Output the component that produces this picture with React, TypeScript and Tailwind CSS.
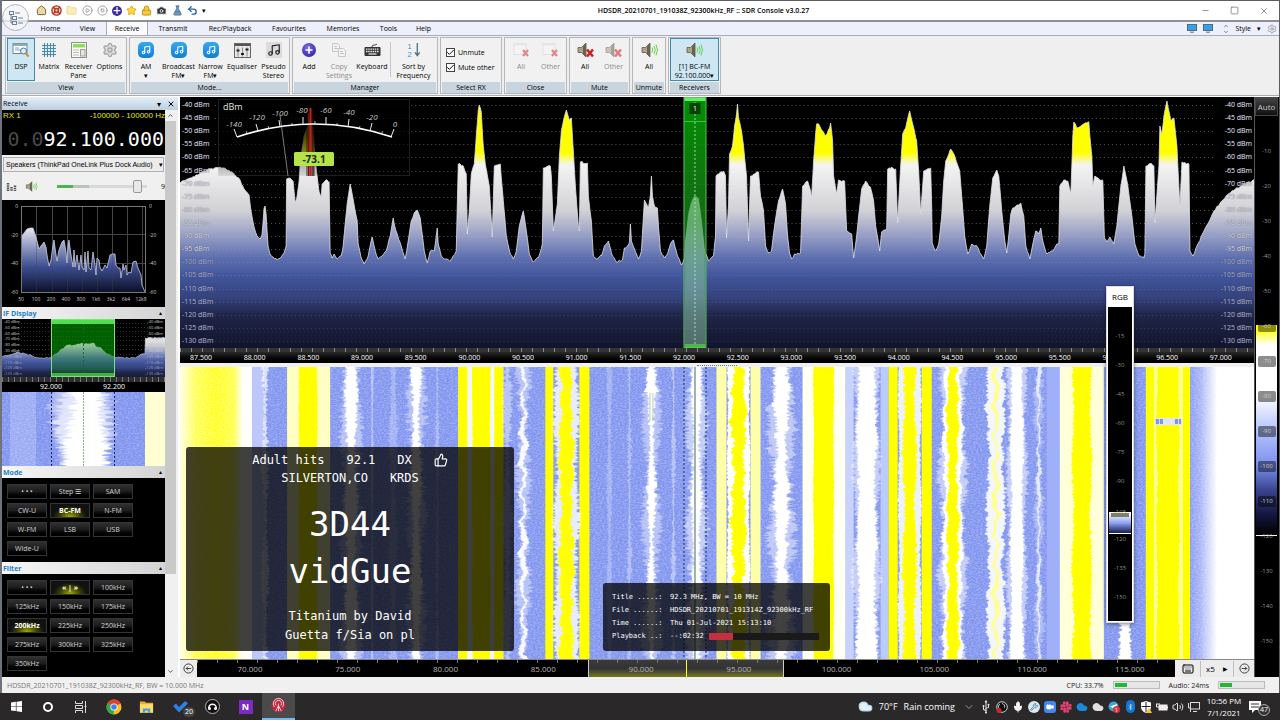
import { useMemo } from "react";
import type { ReactNode } from "react";
import {
  Bluetooth,
  Camera,
  Check,
  ChevronDown,
  ChevronUp,
  CirclePlay,
  CircleStop,
  Cloud,
  FlaskConical,
  Folder,
  Home,
  Keyboard,
  LifeBuoy,
  Lock,
  Mic,
  Minus,
  Music,
  Plus,
  Settings,
  Slack,
  Square,
  Star,
  ThumbsUp,
  Undo2,
  Usb,
  Video,
  Volume2,
  Wrench,
  X,
} from "lucide-react";

type Point = [number, number];

const WATERFALL_W = 1073;
const WATERFALL_H = 292;

const TRACE =
  "0,87 10,82 20,77 30,73 40,71 46,73 54,78 60,84 64,93 69,99 71,115 74,131 77,140 80,143 82,138 83,126 84,112 85,110 86,118 87,135 88,150 90,158 93,161 97,164 101,161 104,157 106,150 106.5,83 109,82 113,85 115,107 117,100 119,85 120,68 122,53 124,40 127,32 130,20 133,38 135,62 137,80 139,96 141,102 142,88 147,84 149,86 150,157 152,162 154,158 157,163 161,160 163,150 165,128 167,108 170,88 172,98 175,115 177,124 178,148 181,162 184,168 188,160 191,145 192,141 195,155 198,163 202,160 206,155 210,140 213,122 214,128 217,138 221,150 225,163 228,145 231,125 234,117 237,114 240,122 242,138 244,155 247,167 250,155 254,155 257,132 258,148 261,160 265,163 270,165 276,155 277,110 278,68 283,70 286,78 287,138 289,115 291,78 294,68 296,40 298,14 299,9 301,16 303,50 305,68 309,90 312,141 314,70 320,68 321,82 323,105 326,140 330,158 333,163 336,155 339,130 343,115 346,135 349,158 353,166 358,162 362,148 363,72 370,70 371,80 373,135 377,108 379,60 381,35 383,25 386,14 389,24 391,22 393,55 395,90 398,130 399,135 400,66 407,67 408,100 411,125 413,160 416,163 421,160 424,150 428,145 432,160 436,166 442,164 444,152 447,150 449,146 450,128 451,145 454,153 458,163 461,155 463,120 464,104 468,112 470,98 471,80 472,100 474,110 477,112 478,130 480,155 484,162 487,158 490,148 493,144 497,160 501,169 504,162 505,145 508,118 511,106 514,100 518,102 521,125 524,155 528,165 533,160 535,140 535.5,80 538,78 543,75 545,80 546,142 548,110 549,58 552,50 554,30 556,18 557,8 558,22 561,35 563,50 566,80 568,145 570,80 574,78 578,76 580,100 583,115 585,150 588,157 591,155 594,130 598,105 602,93 605,108 607,140 609,157 611,163 614,158 620,157 622,90 627,85 630,95 631,102 633,65 635,38 636,28 638,28 641,34 645,40 649,32 650,27 652,45 653,80 656,98 658,84 664,85 666,135 671,138 673,162 676,140 678,120 681,93 685,85 690,92 693,105 695,130 699,155 701,136 706,134 707,73 711,71 715,73 717,127 720,70 722,38 725,32 729,15 732,28 736,45 738,75 740,118 743,75 750,72 751,110 751.5,147 755,155 758,148 761,120 763,85 765,65 769,55 770,53 774,60 779,75 781,100 784,140 787,158 791,148 796,150 800,158 803,163 806,150 809,110 812,82 816,74 818,80 821,115 824,145 826,157 828,140 830,118 832,112 835,110 840,107 843,120 845,150 849,163 852,148 855,135 858,138 860,132 862,145 866,158 872,155 876,148 878,148 879,90 883,84 887,85 890,98 892,40 893,26 896,32 900,30 908,26 909,40 911,60 912,90 914,80 917,82 922,85 923.5,142 926,146 929,141 933,148 936,130 940,90 943,70 947,90 951,120 954,148 958,160 963,162 964,158 965,70 970,67 973,70 974,127 978,70 979,30 981,38 983,20 986,5 990,25 993,22 996,50 999,112 1001,66 1008,68 1009,155 1012,160 1016,150 1023,135 1033,115 1045,100 1056,92 1073,84";

const AUDIO_TRACE =
  "19,38 22,33 25,29 28,28 31,28 34,37 36,45 37,49 39,46 42,42 44,47 45,55 47,66 49,60 51,45 52,40 54,55 55,61 57,50 60,42 62,40 64,52 65,63 66,45 67,40 69,55 71,67 72,50 73,67 75,55 77,70 79,55 80,67 82,70 83,52 84,72 86,51 87,68 89,70 91,52 93,65 94,75 95,58 97,60 98,67 100,71 103,65 105,68 108,55 110,54 113,54 114,65 116,68 118,68 119,78 121,64 122,70 124,65 125,75 127,72 129,73 131,62 134,61 136,68 139,75 140,85 143,92";

const IF_TRACE =
  "0,38 8,36 15,33 20,34 30,37 36,39 49,39 54,35 60,30 65,26 72,26 76,25 80,24 85,25 92,24 94,28 99,29 104,34 112,38 120,39 132,39 140,35 143,35 143.5,19 163,19";

// Straight-edged carriers, left to right.
const SOLID_BANDS: { x: number; w: number; fill: string }[] = [
  { x: 72, w: 12, fill: "#bcc7fa" },
  { x: 107, w: 43, fill: "#ffffc4" },
  { x: 278, w: 45, fill: "#f4f6ff" },
  { x: 278, w: 9, fill: "#ffff00" },
  { x: 314, w: 9, fill: "#ffff00" },
  { x: 365, w: 8, fill: "#ffff00" },
  { x: 399, w: 10, fill: "#ffff00" },
  { x: 536, w: 10, fill: "#ffffa8" },
  { x: 570, w: 10, fill: "#ffffa8" },
  { x: 622, w: 43, fill: "#fffff2" },
  { x: 665, w: 8, fill: "#c8d3fd" },
  { x: 700, w: 8, fill: "#bccbfd" },
  { x: 708, w: 9, fill: "#ffff00" },
  { x: 741, w: 10, fill: "#ffff00" },
  { x: 866, w: 13, fill: "#9fb0f8" },
  { x: 879, w: 44, fill: "#ffffd8" },
  { x: 965, w: 44, fill: "#ffff9a" },
  { x: 965, w: 8, fill: "#ffff00" },
  { x: 1002, w: 7, fill: "#ffff00" },
];

// Ragged-edged carriers: centre, half width, jitter, slow wobble.
const RAGGED_BANDS: { cx: number; hw: number; amp: number; wob: number; fill: string; o?: number }[] = [
  { cx: 85, hw: 2, amp: 4, wob: 0, fill: "#fff", o: 0.7 },
  { cx: 171, hw: 9, amp: 7, wob: 0, fill: "#fff", o: 0.4 },
  { cx: 171, hw: 5, amp: 4, wob: 0, fill: "#fff" },
  { cx: 192, hw: 1, amp: 1, wob: 0, fill: "#fff", o: 0.4 },
  { cx: 213, hw: 3, amp: 3, wob: 0, fill: "#fff", o: 0.25 },
  { cx: 236, hw: 7, amp: 8, wob: 0, fill: "#fff", o: 0.4 },
  { cx: 236, hw: 4, amp: 4, wob: 0, fill: "#fff" },
  { cx: 257, hw: 1, amp: 2, wob: 0, fill: "#fff", o: 0.3 },
  { cx: 327, hw: 3, amp: 5, wob: 0, fill: "#fff", o: 0.4 },
  { cx: 343, hw: 5, amp: 7, wob: 1, fill: "#fff", o: 0.4 },
  { cx: 343, hw: 2, amp: 3, wob: 2, fill: "#fff", o: 0.9 },
  { cx: 386, hw: 11, amp: 6, wob: 0, fill: "#fff", o: 0.8 },
  { cx: 429, hw: 2, amp: 2, wob: 0, fill: "#fff", o: 0.25 },
  { cx: 449, hw: 1, amp: 3, wob: 0, fill: "#fff", o: 0.35 },
  { cx: 471, hw: 7, amp: 8, wob: 0, fill: "#fff", o: 0.4 },
  { cx: 471, hw: 3, amp: 4, wob: 0, fill: "#fff" },
  { cx: 493, hw: 1, amp: 3, wob: 0, fill: "#fff", o: 0.4 },
  { cx: 516, hw: 8, amp: 8, wob: 0, fill: "#fff", o: 0.5 },
  { cx: 516, hw: 4, amp: 4, wob: 0, fill: "#fff" },
  { cx: 558, hw: 11, amp: 2, wob: 0, fill: "#fff" },
  { cx: 601, hw: 11, amp: 9, wob: 1, fill: "#fff", o: 0.45 },
  { cx: 601, hw: 6, amp: 5, wob: 1, fill: "#fff" },
  { cx: 686, hw: 12, amp: 6, wob: 0, fill: "#fff", o: 0.5 },
  { cx: 686, hw: 9, amp: 4, wob: 0, fill: "#fff" },
  { cx: 729, hw: 11, amp: 2, wob: 0, fill: "#fff", o: 0.85 },
  { cx: 772, hw: 12, amp: 7, wob: 1, fill: "#fff", o: 0.5 },
  { cx: 772, hw: 9, amp: 3, wob: 1, fill: "#fff" },
  { cx: 815, hw: 8, amp: 4, wob: 1, fill: "#fff", o: 0.9 },
  { cx: 836, hw: 9, amp: 5, wob: 0, fill: "#fff", o: 0.5 },
  { cx: 836, hw: 6, amp: 3, wob: 0, fill: "#fff" },
  { cx: 858, hw: 3, amp: 5, wob: 1, fill: "#fff", o: 0.3 },
  { cx: 858, hw: 1, amp: 2, wob: 1, fill: "#fff", o: 0.7 },
  { cx: 944, hw: 5, amp: 4, wob: 0, fill: "#fff" },
  { cx: 128, hw: 9, amp: 1, wob: 0, fill: "#ff0" },
  { cx: 301, hw: 9, amp: 1, wob: 0, fill: "#ff0" },
  { cx: 386, hw: 6, amp: 4, wob: 1, fill: "#ff0" },
  { cx: 558, hw: 6, amp: 4, wob: 1, fill: "#ff0" },
  { cx: 643, hw: 10, amp: 1, wob: 0, fill: "#ff0" },
  { cx: 729, hw: 6, amp: 4, wob: 0, fill: "#ff0" },
  { cx: 772, hw: 5, amp: 3, wob: 1, fill: "#ff0" },
  { cx: 815, hw: 2, amp: 2, wob: 2, fill: "#ffff9a" },
  { cx: 901, hw: 9, amp: 3, wob: 0, fill: "#ff0" },
  { cx: 987, hw: 11, amp: 2, wob: 0, fill: "#ff0" },
];

function seededRandom(seed: number) {
  let s = seed * 7919 + 13;
  return () => {
    s = (s * 1103515245 + 12345) & 0x7fffffff;
    return s / 0x7fffffff;
  };
}

function raggedPath(seed: number, cx: number, hw: number, amp: number, wob: number, height: number) {
  const rand = seededRandom(seed);
  const left: string[] = [];
  const right: string[] = [];
  for (let y = 0; y <= height; y += 1) {
    const c = cx + wob * Math.sin(y / 5 + seed) + wob * 0.5 * Math.sin(y / 2.3);
    const swell = Math.sin(y / 17 + seed * 2) * amp * 0.3;
    const l = Math.max(0.4, hw + swell + (rand() - 0.5) * amp);
    const r = Math.max(0.4, hw + swell + (rand() - 0.5) * amp);
    left.push(`${(c - l).toFixed(1)},${y}`);
    right.push(`${(c + r).toFixed(1)},${y}`);
  }
  return `M${left.join("L")}L${right.reverse().join("L")}Z`;
}

function roughen(points: string, size: number) {
  const rand = seededRandom(5);
  const pts = points.split(" ").map((p) => p.split(",").map(Number) as Point);
  const out: string[] = [];
  pts.forEach(([x, y], i) => {
    out.push(`${x},${y}`);
    const next = pts[i + 1];
    if (!next) return;
    const gap = next[0] - x;
    for (let d = 1.5; d < gap; d += 1.5) {
      const t = d / gap;
      out.push(`${x + d},${(y + (next[1] - y) * t + (rand() - 0.5) * size).toFixed(1)}`);
    }
  });
  return out.join(" ");
}

function SignalGradient({ id, y1, y2, hot }: { id: string; y1: number; y2: number; hot?: boolean }) {
  return (
    <linearGradient id={id} gradientUnits="userSpaceOnUse" x1="0" x2="0" y1={y1} y2={y2}>
      <stop offset="0" stopColor={hot ? "#ffff00" : "#fff"} />
      <stop offset="0.18" stopColor={hot ? "#ffff00" : "#ececf0"} />
      <stop offset="0.23" stopColor="#f4f4f4" />
      <stop offset="0.42" stopColor="#d2d2d6" />
      <stop offset="0.52" stopColor="#9ba2c6" />
      <stop offset="0.62" stopColor="#5f70b0" />
      <stop offset="0.7" stopColor="#42559b" />
      <stop offset="0.79" stopColor="#34427c" />
      <stop offset="0.86" stopColor="#20264a" />
      <stop offset="1" stopColor="#11142b" />
    </linearGradient>
  );
}

/* ---------- ribbon icons ---------- */

function DspIcon() {
  return (
    <svg viewBox="0 0 18 16" className="h-4 w-[18px]">
      <rect x="1" y="1.500" width="14" height="10" fill="#fff" stroke="#6a8791" />
      <rect x="1" y="1.500" width="14" height="2.500" fill="#93a9ad" />
      <path d="M3 6h4M3 8h6" stroke="#7aa4b0" />
      <circle cx="11.500" cy="9" r="3" fill="#d8f0fa" stroke="#4b7d94" />
      <path d="M13.500 11l3 3.500" stroke="#d58a3a" strokeWidth="2" />
    </svg>
  );
}

function MatrixIcon() {
  return (
    <svg viewBox="0 0 16 16" className="size-4">
      <rect x="1" y="1" width="14" height="14" fill="#e3eef3" />
      <path d="M3.500 1v14M6.500 1v14M9.500 1v14M12.500 1v14M1 3.500h14M1 6.500h14M1 9.500h14M1 12.500h14" stroke="#4d8aa8" />
    </svg>
  );
}

function PaneIcon() {
  return (
    <svg viewBox="0 0 16 16" className="size-4">
      <rect x="0.500" y="0.500" width="15" height="15" fill="#fafafa" stroke="#8b938b" />
      <rect x="2" y="2" width="12" height="3.500" fill="#8ce053" />
      <path d="M2 8h6M2 10.500h6M2 13h6" stroke="#b9bdb9" />
      <rect x="9.500" y="7.500" width="4.500" height="6.500" fill="#e6e6e6" stroke="#a0a0a0" />
    </svg>
  );
}

function NoteIcon() {
  return (
    <span className="flex size-4 items-center justify-center rounded-[5px] bg-gradient-to-b from-[#35a9ef] to-[#0c7fd6] text-white">
      <Music className="size-[10px]" strokeWidth={2.5} />
    </span>
  );
}

function EqualiserIcon() {
  return (
    <svg viewBox="0 0 17 15" className="h-[15px] w-[17px]">
      <rect x="0.500" y="0.500" width="16" height="14" fill="#e8e8e8" stroke="#666" />
      <rect x="1" y="1" width="15" height="2" fill="#555" />
      <path d="M4 4.500v9M8.500 4.500v9M13 4.500v9" stroke="#888" />
      <path d="M2.500 7.500h3M7 11h3M11.500 6.500h3" stroke="#222" strokeWidth="1.800" />
    </svg>
  );
}

function StereoIcon() {
  return (
    <span className="flex size-4 items-center justify-center bg-[#dcdcdc] text-[#222]">
      <Music className="size-[14px]" strokeWidth={2} />
    </span>
  );
}

function AddIcon() {
  return (
    <span className="flex size-[14px] items-center justify-center rounded-full bg-[radial-gradient(circle_at_40%_30%,#7a68e8,#2a1a94)] text-white">
      <Plus className="size-[10px]" strokeWidth={4} />
    </span>
  );
}

function CopyIcon() {
  return (
    <svg viewBox="0 0 16 16" className="size-4" fill="#f4f4f4" stroke="#a4a4a4">
      <path d="M1.500 1.500h5l2 2v6h-7z" />
      <path d="M3 4.500h3M3 6.500h4" />
      <path d="M7.500 6.500h5l2 2v6h-7z" />
      <path d="M9 9.500h3M9 11.500h4" />
    </svg>
  );
}

function KeyboardIcon() {
  return (
    <svg viewBox="0 0 17 14" className="h-[14px] w-[17px]">
      <path d="M8 4c0-3 3-1 5-3" fill="none" stroke="#333" />
      <rect x="0.500" y="4" width="16" height="9" rx="1" fill="#333" />
      <path d="M2 6.200h13M2 8.500h13" stroke="#eee" strokeWidth="1.300" strokeDasharray="1.500 0.700" />
      <path d="M4.500 11h8" stroke="#eee" strokeWidth="1.200" />
    </svg>
  );
}

function SortIcon() {
  return (
    <svg viewBox="0 0 14 17" className="h-4 w-[14px]">
      <text x="0" y="7" fontSize="8" fill="#3b8fc9" fontFamily="Liberation Sans, sans-serif">1</text>
      <text x="0" y="16" fontSize="8" fill="#3b8fc9" fontFamily="Liberation Sans, sans-serif">2</text>
      <path d="M10.500 1v13M8 11l2.500 3.500L13 11" fill="none" stroke="#4d7280" strokeWidth="1.400" />
    </svg>
  );
}

function CloseDocIcon() {
  return (
    <svg viewBox="0 0 17 16" className="h-4 w-[17px]">
      <rect x="1" y="1.500" width="12" height="11" fill="#f8f8f8" stroke="#d5d5d5" />
      <rect x="1" y="1.500" width="12" height="2" fill="#dedede" />
      <path d="M10 8l5 6M15 8l-5 6" stroke="#d4363f" strokeWidth="2.400" />
    </svg>
  );
}

function SpeakerIcon({ muted }: { muted?: boolean }) {
  return (
    <svg viewBox="0 0 17 16" className="h-4 w-[17px]">
      <path d="M1 5.500h3.500L9 1v14L4.500 10.500H1z" fill="#aaa58c" stroke="#5a574a" strokeWidth="0.800" />
      <path d="M6 4.500L9 1v14L6 12z" fill="#66634f" />
      {muted ? (
        <path d="M10 7.500l6 7M16 7.500l-6 7" stroke="#cf1f24" strokeWidth="2.600" />
      ) : (
        <g fill="none" stroke="#63d24a">
          <path d="M11 5.500q1.500 2.500 0 5" />
          <path d="M13 4q2.500 4 0 8" />
          <path d="M15 2.500q3 5.500 0 11" />
        </g>
      )}
    </svg>
  );
}

/* ---------- ribbon ---------- */

type RibbonItem = { lines: string[]; icon: ReactNode; width: string; dim?: boolean; selected?: boolean };

function RibbonButton({ item }: { item: RibbonItem }) {
  return (
    <button
      type="button"
      className={`flex shrink-0 flex-col items-center border pt-[3px] ${item.width} ${
        item.selected ? "border-[#3c8dad] bg-[#cfe7f2]" : "border-transparent"
      } ${item.dim ? "text-[#8c8c8c]" : ""}`}
    >
      <span className={`flex h-4 items-center justify-center ${item.dim ? "opacity-55" : ""}`}>{item.icon}</span>
      <span className="mt-[4px] flex flex-col items-center whitespace-nowrap">
        {item.lines.map((line) => (
          <span key={line}>{line}</span>
        ))}
      </span>
    </button>
  );
}

function RibbonGroup({ title, children }: { title: string; children: ReactNode }) {
  return (
    <section className="flex flex-col border border-[#b4b8bc] bg-[#f1f1f1] px-[1px]">
      <div className="flex flex-1 pb-[1px]">{children}</div>
      <h2 className="bg-[#c9d5de] text-center leading-[11px]">{title}</h2>
    </section>
  );
}

const VIEW_ITEMS: RibbonItem[] = [
  { lines: ["DSP"], icon: <DspIcon />, width: "w-[28px]", selected: true },
  { lines: ["Matrix"], icon: <MatrixIcon />, width: "w-[28px]" },
  { lines: ["Receiver", "Pane"], icon: <PaneIcon />, width: "w-[31px]" },
  { lines: ["Options"], icon: <Settings className="size-4 text-[#a4a4a4]" fill="#ddd" />, width: "w-[31px]" },
];

const MODE_ITEMS: RibbonItem[] = [
  { lines: ["AM", "▾"], icon: <NoteIcon />, width: "w-[30px]" },
  { lines: ["Broadcast", "FM▾"], icon: <NoteIcon />, width: "w-[35px]" },
  { lines: ["Narrow", "FM▾"], icon: <NoteIcon />, width: "w-[29px]" },
  { lines: ["Equaliser"], icon: <EqualiserIcon />, width: "w-[34px]" },
  { lines: ["Pseudo", "Stereo"], icon: <StereoIcon />, width: "w-[29px]" },
];

const MANAGER_ITEMS: RibbonItem[] = [
  { lines: ["Add"], icon: <AddIcon />, width: "w-[30px]" },
  { lines: ["Copy", "Settings"], icon: <CopyIcon />, width: "w-[30px]", dim: true },
  { lines: ["Keyboard"], icon: <KeyboardIcon />, width: "w-[36px]" },
];

function Ribbon() {
  return (
    <div className="flex gap-[2px] border-t border-[#a9abb5] bg-[#efefef] px-[3px] py-[1px]">
      <RibbonGroup title="View">
        {VIEW_ITEMS.map((item) => (
          <RibbonButton key={item.lines[0]} item={item} />
        ))}
      </RibbonGroup>
      <RibbonGroup title="Mode...">
        {MODE_ITEMS.map((item) => (
          <RibbonButton key={item.lines[0]} item={item} />
        ))}
      </RibbonGroup>
      <RibbonGroup title="Manager">
        {MANAGER_ITEMS.map((item) => (
          <RibbonButton key={item.lines[0]} item={item} />
        ))}
        <div className="my-[4px] w-px bg-[#c4c8cc]" />
        <RibbonButton item={{ lines: ["Sort by", "Frequency"], icon: <SortIcon />, width: "w-[45px]" }} />
      </RibbonGroup>
      <RibbonGroup title="Select RX">
        <div className="flex w-[58px] flex-col gap-[6px] pt-[10px] pl-[4px]">
          {["Unmute", "Mute other"].map((label) => (
            <label key={label} className="flex items-center gap-[3px] whitespace-nowrap">
              <span className="relative size-[9px]">
                <input type="checkbox" defaultChecked className="block size-[9px] appearance-none border border-[#444] bg-white" />
                <Check className="pointer-events-none absolute inset-0 size-[9px]" strokeWidth={2.5} />
              </span>
              {label}
            </label>
          ))}
        </div>
      </RibbonGroup>
      <RibbonGroup title="Close">
        <RibbonButton item={{ lines: ["All"], icon: <CloseDocIcon />, width: "w-[30px]", dim: true }} />
        <RibbonButton item={{ lines: ["Other"], icon: <CloseDocIcon />, width: "w-[29px]", dim: true }} />
      </RibbonGroup>
      <RibbonGroup title="Mute">
        <RibbonButton item={{ lines: ["All"], icon: <SpeakerIcon muted />, width: "w-[28px]" }} />
        <RibbonButton item={{ lines: ["Other"], icon: <SpeakerIcon muted />, width: "w-[29px]", dim: true }} />
      </RibbonGroup>
      <RibbonGroup title="Unmute">
        <RibbonButton item={{ lines: ["All"], icon: <SpeakerIcon />, width: "w-[30px]" }} />
      </RibbonGroup>
      <RibbonGroup title="Receivers">
        <RibbonButton item={{ lines: ["[1]  BC-FM", "92.100.000▾"], icon: <SpeakerIcon />, width: "w-[49px]", selected: true }} />
      </RibbonGroup>
    </div>
  );
}

const TABS: { label: string; width: string }[] = [
  { label: "Home", width: "w-[37px]" },
  { label: "View", width: "w-[37px]" },
  { label: "Receive", width: "w-[42px]" },
  { label: "Transmit", width: "w-[50px]" },
  { label: "Rec/Playback", width: "w-[64px]" },
  { label: "Favourites", width: "w-[54px]" },
  { label: "Memories", width: "w-[54px]" },
  { label: "Tools", width: "w-[37px]" },
  { label: "Help", width: "w-[33px]" },
];

function MonitorIcon() {
  return (
    <svg viewBox="0 0 10 9" className="h-[9px] w-[10px]">
      <rect x="0" y="0" width="10" height="7" fill="#555" />
      <rect x="0.700" y="0.700" width="8.600" height="5.600" fill="#3d9fe0" />
      <rect x="3" y="7.500" width="4" height="1.500" fill="#999" />
    </svg>
  );
}

function TitleArea() {
  return (
    <header className="relative">
      <div className="flex h-[20px] items-center border-t border-[#5c5c60] bg-white pl-[34px]">
        <div className="flex w-[170px] shrink-0 items-center justify-between [&_svg]:size-[11px]">
          <Home color="#6b5a3a" fill="#e9d9a0" />
          <LifeBuoy color="#b5301c" fill="#f3d6c8" strokeWidth={3} />
          <Folder color="#ead68c" fill="#fbeeb8" />
          <CirclePlay color="#999" />
          <CircleStop color="#999" />
          <span className="flex size-[10px] items-center justify-center rounded-full bg-[#3a2aa8] text-white">
            <Plus strokeWidth={3} />
          </span>
          <Star color="#e0a010" fill="#ffd940" />
          <Lock color="#b8901a" fill="#f5c93a" />
          <Camera color="#eee" fill="#333" />
          <FlaskConical color="#5f7791" fill="#6c9ac8" />
          <Undo2 color="#2764b5" strokeWidth={3} />
          <span className="text-[7px]">▾</span>
        </div>
        <h1 className="flex-1 text-center text-[7px] font-semibold whitespace-nowrap">
          HDSDR_20210701_191038Z_92300kHz_RF :: SDR Console v3.0.27
        </h1>
        <div className="flex shrink-0 items-center gap-[20px] pr-[10px] text-[#777]">
          <button type="button" aria-label="Minimize"><Minus className="size-[9px]" strokeWidth={2} /></button>
          <button type="button" aria-label="Maximize"><Square className="size-[9px]" strokeWidth={2} /></button>
          <button type="button" aria-label="Close"><X className="size-[10px]" strokeWidth={2} /></button>
        </div>
      </div>
      <nav className="flex h-[15px] items-stretch border-t-2 border-[#8f9096] bg-[#edeffb] pl-[30px]">
        {TABS.map((tab) => (
          <button
            key={tab.label}
            type="button"
            className={`${tab.width} ${tab.label === "Receive" ? "border-x border-[#a9abb5] bg-[#fbfbfd]" : ""}`}
          >
            {tab.label}
          </button>
        ))}
        <div className="ml-auto flex items-center gap-[6px] pr-[2px]">
          <MonitorIcon />
          <MonitorIcon />
          <span className="ml-[4px] flex flex-col text-[#666]">
            <ChevronUp className="size-[6px]" strokeWidth={3} />
            <ChevronDown className="size-[6px]" strokeWidth={3} />
          </span>
          <button type="button">Style</button>
          <span>▾</span>
          <Settings className="size-[10px] text-[#999]" />
        </div>
      </nav>
      <button
        type="button"
        aria-label="Application menu"
        className="absolute top-[4px] left-0 flex size-[27px] items-center justify-center rounded-full border border-[#b4b4bc] bg-[#f4f4f8]/80"
      >
        <svg viewBox="0 0 16 16" className="size-4" fill="none" stroke="#68809a">
          <rect x="1.500" y="1.500" width="4" height="3" />
          <rect x="4.500" y="6.500" width="4" height="3" />
          <rect x="4.500" y="11.500" width="4" height="3" />
          <path d="M7 3h5M10 8h5M10 13h5M3 5v8h1M3 8h1" />
        </svg>
      </button>
    </header>
  );
}

/* ---------- left column ---------- */

function PanelHeader({ title }: { title: string }) {
  return (
    <div className="flex h-[12px] items-center justify-between bg-gradient-to-r from-[#f6f6f6] to-[#d4d4d4] pr-[3px] pl-[1px]">
      <h3 className="font-bold text-[#1f7fc0]">{title}</h3>
      <span className="text-[6px] text-black">▴</span>
    </div>
  );
}

function PadButton({ label, active }: { label: string; active?: boolean }) {
  return (
    <button
      type="button"
      className={`h-[15px] w-[40px] border border-[#353535] leading-[12px] whitespace-nowrap ${
        active
          ? "bg-[radial-gradient(ellipse_at_bottom,#a3ab00_0%,#3c4000_38%,#111_62%)] font-bold text-white"
          : "bg-gradient-to-b from-[#303030] via-[#1c1c1c] via-50% to-black text-[#d0d0d0]"
      }`}
    >
      {label}
    </button>
  );
}

function PadGrid({ labels, active }: { labels: string[]; active: string[] }) {
  return (
    <div className="grid grid-cols-[repeat(3,40px)] gap-x-[3px] gap-y-[4px] bg-black pl-[5px]">
      {labels.map((label) => (
        <PadButton key={label} label={label} active={active.includes(label)} />
      ))}
    </div>
  );
}

function AudioSpectrum() {
  return (
    <svg viewBox="0 0 163 107" className="block h-[107px] w-full bg-black">
      <defs>
        <linearGradient id="audioFill" x1="0" x2="0" y1="28" y2="92" gradientUnits="userSpaceOnUse">
          <stop offset="0" stopColor="#e8e8ee" />
          <stop offset="0.3" stopColor="#8f98c0" />
          <stop offset="0.6" stopColor="#3e4f92" />
          <stop offset="1" stopColor="#0c1028" />
        </linearGradient>
      </defs>
      <g stroke="#454545" strokeWidth="1">
        {[34, 50, 65, 80, 95, 110, 125, 140].map((x) => (
          <path key={x} d={`M${x}.5 6V92`} />
        ))}
        <path d="M19 34.500h124M19 63.500h124" />
      </g>
      <polygon points={`${AUDIO_TRACE} 143,92 19,92`} fill="url(#audioFill)" />
      <g stroke="#454545" opacity="0.35">
        {[34, 50, 65, 80, 95, 110].map((x) => (
          <path key={x} d={`M${x}.5 6V92`} />
        ))}
      </g>
      <polyline points={AUDIO_TRACE} fill="none" stroke="#c6cbe0" strokeWidth="0.800" />
      <rect x="19.500" y="6.500" width="124" height="86" fill="none" stroke="#777" />
      <g fill="#c8c8c8" fontSize="5" fontFamily="Open Sans, sans-serif">
        {["0", "-20", "-40", "-60"].map((t, i) => (
          <g key={t}>
            <text x="16" y={8 + i * 28.5} textAnchor="end">{t}</text>
            <text x="147" y={8 + i * 28.5}>{t}</text>
          </g>
        ))}
        {["50", "100", "200", "400", "800", "1k6", "3k2", "6k4", "12k8"].map((t, i) => (
          <text key={t} x={19 + i * 15} y="101" textAnchor="middle">{t}</text>
        ))}
      </g>
    </svg>
  );
}

function IfDisplay() {
  const carrier = useMemo(() => raggedPath(41, 81, 26, 16, 0, 74), []);
  const mid = useMemo(() => raggedPath(47, 82, 22, 16, 0, 74), []);
  const core = useMemo(() => raggedPath(43, 84, 17, 14, 0, 74), []);
  const trace = useMemo(() => roughen(IF_TRACE, 1.5), []);
  return (
    <div className="bg-black">
      <svg viewBox="0 0 163 58" className="block h-[58px] w-full">
        <defs>
          <SignalGradient id="ifFill" y1={0} y2={62} />
        </defs>
        <g stroke="#333" strokeDasharray="1 2">
          {[4, 8, 12, 17, 21, 26, 30, 35].map((y) => (
            <path key={y} d={`M16 ${y}.5H148`} />
          ))}
        </g>
        <polygon points={`${trace} 163,58 0,58`} fill="url(#ifFill)" />
        <polyline points={trace} fill="none" stroke="#ccd" strokeWidth="0.700" />
        <rect x="49.500" y="0.500" width="63" height="57" fill="#00a000" fillOpacity="0.600" stroke="#7fe07f" />
        <polygon points={`${trace} 163,58 0,58`} fill="url(#ifFill)" fillOpacity="0.500" clipPath="inset(0 0 0 0)" />
        <rect x="49.500" y="0.500" width="63" height="57" fill="none" stroke="#7fe07f" />
        <rect x="50" y="1" width="62" height="4" fill="#4fe04f" />
        <rect x="50" y="54" width="62" height="3" fill="#43b043" />
        <path d="M81.500 5V54" stroke="#163" strokeDasharray="2 2" />
        <g fill="#c8c8c8" fontSize="4" fontFamily="Open Sans, sans-serif">
          {[40, 50, 60, 70, 80, 90, 100, 110, 120, 130].map((v, i) => (
            <g key={v} opacity={i > 5 ? 0.6 : 1}>
              <text x="2" y={4 + i * 5.8}>{`-${v} dBm`}</text>
              <text x="161" y={4 + i * 5.8} textAnchor="end">{`-${v} dBm`}</text>
            </g>
          ))}
        </g>
      </svg>
      <div className="h-[5px] bg-[repeating-linear-gradient(90deg,#777_0_1px,#2e2e2e_1px_6px)]" />
      <div className="flex h-[10px] justify-center gap-[39px] pr-[2px] leading-[10px] text-white">
        <span className="w-[24px] text-center">92.000</span>
        <span className="w-[24px] text-center">92.200</span>
      </div>
      <svg viewBox="0 0 163 74" className="block h-[74px] w-full">
        <rect width="163" height="74" fill="#8094ee" />
        <rect x="8" width="26" height="74" fill="#b4c0f8" opacity="0.500" />
        <rect width="163" height="74" filter="url(#speckle)" opacity="0.250" />
        <path d={carrier} fill="#fff" opacity="0.350" />
        <path d={mid} fill="#fff" opacity="0.600" />
        <path d={core} fill="#fff" />
        <rect x="143" width="20" height="74" fill="#fffed2" />
        <path d="M49.500 0V74M112.500 0V74" stroke="#225" strokeDasharray="2 2" />
        <path d="M81.500 0V74" stroke="#8ab08a" strokeDasharray="2 1" />
      </svg>
    </div>
  );
}

function ReceivePanel() {
  return (
    <aside className="flex w-[176px] shrink-0 flex-col">
      <div className="flex h-[13px] items-center bg-gradient-to-b from-[#e6eef6] to-[#bccfe0] pr-[3px] pl-[1px]">
        <h2 className="flex-1">Receive</h2>
        <span className="mr-[6px] text-[8px]">▾</span>
        <button type="button" aria-label="Close panel"><X className="size-[8px]" strokeWidth={3} /></button>
      </div>
      <div className="flex flex-1">
        <div className="flex w-[163px] flex-col bg-black">
          <div className="h-[45px] text-white">
            <div className="flex justify-between pl-[1px] font-['Liberation_Sans',sans-serif] text-[8px] leading-[11px] whitespace-nowrap text-[#e8e800]">
              <span>RX 1</span>
              <span>-100000 - 100000 Hz</span>
            </div>
            <div className="flex justify-end pt-[5px] pr-[1px] font-['DejaVu_Sans_Mono',monospace] text-[20px] leading-[26px]">
              <span className="text-[#4a4a4a]">0.0</span>
              <span>92.100.000</span>
            </div>
          </div>
          <div className="bg-[#f0f0f0] pt-[2px]">
            <label className="relative mx-[1px] block">
              <select
                aria-label="Output device"
                className="block h-[15px] w-full appearance-none border border-[#b0b0b0] bg-[#ececec] pl-[2px] font-['Liberation_Sans',sans-serif] text-[7px]"
              >
                <option>Speakers (ThinkPad OneLink Plus Dock Audio)</option>
              </select>
              <span className="pointer-events-none absolute top-[3px] right-[1px]">▾</span>
            </label>
            <div className="flex h-[28px] items-center pl-[4px]">
              <svg viewBox="0 0 11 9" className="h-[9px] w-[11px] shrink-0">
                <path d="M2 1v8M5.500 5v4M9 3.500v5.500" stroke="#555" strokeWidth="2.500" strokeDasharray="1.500 0.700" />
              </svg>
              <span className="ml-[8px] shrink-0 [&_svg]:h-[11px] [&_svg]:w-[13px]"><SpeakerIcon /></span>
              <input
                type="range"
                aria-label="Volume"
                defaultValue={94}
                className="ml-[19px] h-[13px] w-[90px] shrink-0 appearance-none bg-[linear-gradient(90deg,#4fb34f_0_18%,#b9c4b9_18%_36%,#d8d8d8_36%)] bg-[length:100%_3px] bg-center bg-no-repeat [&::-webkit-slider-thumb]:h-[13px] [&::-webkit-slider-thumb]:w-[9px] [&::-webkit-slider-thumb]:appearance-none [&::-webkit-slider-thumb]:rounded-[2px] [&::-webkit-slider-thumb]:border [&::-webkit-slider-thumb]:border-[#999] [&::-webkit-slider-thumb]:bg-[#e8e8e8]"
              />
              <span className="ml-auto">9</span>
            </div>
          </div>
          <AudioSpectrum />
          <PanelHeader title="IF Display" />
          <IfDisplay />
          <PanelHeader title="Mode" />
          <div className="pt-[6px] pb-[6px]">
            <PadGrid
              labels={["• • •", "Step ☰", "SAM", "CW-U", "BC-FM", "N-FM", "W-FM", "LSB", "USB", "Wide-U"]}
              active={["BC-FM"]}
            />
          </div>
          <PanelHeader title="Filter" />
          <div className="pt-[6px]">
            <PadGrid
              labels={["• • •", "« | »", "100kHz", "125kHz", "150kHz", "175kHz", "200kHz", "225kHz", "250kHz", "275kHz", "300kHz", "325kHz", "350kHz"]}
              active={["« | »", "200kHz"]}
            />
          </div>
        </div>
        <div className="flex w-[11px] flex-col items-center bg-[#f0f0f0]">
          <ChevronUp className="my-[2px] size-[7px] text-[#444]" strokeWidth={3} />
          <div className="w-full flex-[451] bg-[#c9c9c9]" />
          <div className="flex-[92]" />
          <ChevronDown className="my-[2px] size-[7px] text-[#444]" strokeWidth={3} />
        </div>
      </div>
    </aside>
  );
}

/* ---------- spectrum ---------- */

const DBM = Array.from({ length: 19 }, (_, i) => -40 - i * 5);
const MHZ = Array.from({ length: 20 }, (_, i) => (87.5 + i * 0.5).toFixed(3));

function DbmScale({ side }: { side: string }) {
  return (
    <div
      className={`absolute top-[2px] bottom-[1px] flex flex-col justify-between leading-[12px] text-[#dcdce2] [text-shadow:0_0_1px_#445] ${side}`}
    >
      {DBM.map((v) => (
        <span key={v} className={v <= -100 ? "text-[#a4a9cc]" : ""}>{`${v} dBm`}</span>
      ))}
    </div>
  );
}

function SignalMeter() {
  const labels: [string, number, number][] = [
    ["-140", 16, 28],
    ["-120", 39, 21],
    ["-100", 62, 17],
    ["-80", 84, 14],
    ["-60", 108, 14],
    ["-40", 131, 16],
    ["-20", 154, 21],
    ["0", 177, 28],
  ];
  return (
    <svg
      viewBox="0 0 192 77"
      className="absolute top-[2px] left-[38px] h-[77px] w-[192px] bg-gradient-to-b from-black/90 via-black/70 to-black/10"
    >
      <rect x="0.500" y="0.500" width="191" height="76" fill="none" stroke="#fff" strokeOpacity="0.120" />
      <path d="M62 16L70 77" stroke="#999" strokeWidth="0.800" />
      <rect x="88" y="10" width="9" height="67" fill="#200" fillOpacity="0.400" />
      <path d="M90.500 14V77" stroke="#701010" />
      <path d="M92.500 9V77" stroke="#c81c1c" strokeWidth="2" />
      <path d="M95 20V77" stroke="#401010" />
      <path d="M19 38Q96 12 174 38" fill="none" stroke="#fff" strokeWidth="1.600" />
      <g stroke="#eee" strokeWidth="1">
        <path d="M19 38l-3-8M40 32l-2-7M62 28l-1-7M85 26v-8M108 26v-8M130 28l1-8M152 32l2-8M173 38l3-8" />
        <path d="M29 35l-1-3M51 30l-1-3M74 27v-3M97 25v-3M119 27v-3M141 30l1-3M163 35l2-3" strokeWidth="0.700" />
      </g>
      <g fill="#c8c8c8" fontSize="8" fontStyle="italic" fontFamily="Open Sans, sans-serif" textAnchor="middle">
        {labels.map(([t, x, y]) => (
          <text key={t} x={x} y={y}>{t}</text>
        ))}
      </g>
      <text x="5" y="11" fill="#e4e4e4" fontSize="9" fontFamily="Open Sans, sans-serif">dBm</text>
      <rect x="76" y="53" width="40" height="14" rx="1.500" fill="#b4e34a" />
      <text x="96" y="64" textAnchor="middle" fontSize="10" fontWeight="700" fill="#222" fontFamily="Open Sans, sans-serif">-73.1</text>
    </svg>
  );
}

function Spectrum() {
  const trace = useMemo(() => roughen(TRACE, 2), []);
  return (
    <section className="bg-black">
      <div className="relative h-[251px]">
        <svg viewBox="0 1 1073 251" preserveAspectRatio="none" className="absolute inset-0 size-full">
          <defs>
            <SignalGradient id="rfFill" y1={14} y2={252} hot />
            <linearGradient id="rxFill" x1="0" x2="0" y1="0" y2="1">
              <stop offset="0" stopColor="#00a000" stopOpacity="0.900" />
              <stop offset="0.5" stopColor="#1c8a1c" stopOpacity="0.750" />
              <stop offset="0.75" stopColor="#5c9c8c" stopOpacity="0.450" />
              <stop offset="1" stopColor="#406060" stopOpacity="0.450" />
            </linearGradient>
          </defs>
          <g stroke="#3a3a3a" strokeDasharray="1 3">
            {DBM.map((v, i) => (
              <path key={v} d={`M35 ${Math.round(9 + i * 13.11)}.5H1035`} />
            ))}
          </g>
          <polygon points={`${trace} 1073,252 0,252`} fill="url(#rfFill)" />
          <polyline points={trace} fill="none" stroke="#e0e0e8" strokeWidth="0.800" />
          <g stroke="#fff" strokeOpacity="0.120" strokeDasharray="1 3">
            {DBM.map((v, i) => (
              <path key={v} d={`M35 ${Math.round(9 + i * 13.11)}.5H1035`} />
            ))}
          </g>
          <rect x="503.500" y="1.500" width="22" height="250" fill="url(#rxFill)" stroke="#5fc05f" />
          <polygon points="505,145 508,118 511,106 514,100 518,102 521,125 524,155 525,250 504,250" fill="#9fd0b0" fillOpacity="0.350" />
          <rect x="504" y="2" width="21" height="3" fill="#62f062" />
          <rect x="504" y="248" width="21" height="3" fill="#4ab84a" />
          <path d="M504 25.500h21" stroke="#40c040" />
          <path d="M514.500 6V248" stroke="#cfe8cf" strokeDasharray="2 2" strokeWidth="0.800" />
          <rect x="509" y="7" width="11" height="11" fill="#064006" />
          <text x="514.500" y="15" textAnchor="middle" fontSize="7" fill="#fff" fontFamily="Open Sans, sans-serif">1</text>
        </svg>
        <DbmScale side="left-[2px]" />
        <DbmScale side="right-[2px] text-right" />
        <SignalMeter />
      </div>
      <div className="h-[4px] bg-[repeating-linear-gradient(90deg,#888_0_1px,#333_1px_11px)]" />
      <div className="flex h-[11px] justify-between bg-gradient-to-b from-[#2a2a2a] to-black pr-[21px] pl-[9px] leading-[11px] text-white">
        {MHZ.map((f) => (
          <span key={f} className="w-[24px] text-center">{f}</span>
        ))}
      </div>
    </section>
  );
}

/* ---------- waterfall ---------- */

function WaterfallCanvas() {
  const paths = useMemo(
    () => RAGGED_BANDS.map((b, i) => raggedPath(i + 1, b.cx, b.hw, b.amp, b.wob, WATERFALL_H)),
    [],
  );
  return (
    <svg viewBox={`0 0 ${WATERFALL_W} ${WATERFALL_H}`} preserveAspectRatio="none" className="absolute inset-0 size-full">
      <defs>
        <filter id="speckle" x="0" y="0" width="100%" height="100%">
          <feTurbulence type="fractalNoise" baseFrequency="0.45 0.8" numOctaves="2" seed="4" />
          <feColorMatrix values="0 0 0 0 1  0 0 0 0 1  0 0 0 0 1  2.4 0 0 0 -0.9" />
        </filter>
        <linearGradient id="leftEdge">
          <stop offset="0" stopColor="#ffffe4" />
          <stop offset="0.22" stopColor="#ffff50" />
          <stop offset="0.5" stopColor="#ffff1c" />
          <stop offset="0.75" stopColor="#ffff48" />
          <stop offset="0.86" stopColor="#fffff4" />
          <stop offset="1" stopColor="#ffffff" />
        </linearGradient>
        <linearGradient id="rightEdge">
          <stop offset="0" stopColor="#8a9cf2" />
          <stop offset="0.16" stopColor="#a6b4f6" />
          <stop offset="0.42" stopColor="#ffffff" />
        </linearGradient>
      </defs>
      <rect width={WATERFALL_W} height={WATERFALL_H} fill="#8195ef" />
      <rect x="1009" width="64" height={WATERFALL_H} fill="url(#rightEdge)" />
      <rect width={WATERFALL_W} height={WATERFALL_H} filter="url(#speckle)" opacity="0.280" />
      <rect width="72" height={WATERFALL_H} fill="url(#leftEdge)" />
      <rect width="72" height={WATERFALL_H} filter="url(#speckle)" opacity="0.400" />
      {SOLID_BANDS.map((b) => (
        <rect key={`${b.x}-${b.w}`} x={b.x} y="0" width={b.w} height={WATERFALL_H} fill={b.fill} />
      ))}
      {RAGGED_BANDS.map((b, i) => (
        <path key={i} d={paths[i]} fill={b.fill} opacity={b.o ?? 1} />
      ))}
      <path d="M463 25h16l-5-8h-6z" fill="#fff" />
      <path d="M469.500 26V54M472.500 26V54" stroke="#9bb0a8" strokeWidth="0.700" />
      <rect x="974" y="51" width="27" height="7" fill="#dfe6ff" />
      <path d="M975 54.500h7M994 54.500h6" stroke="#7f93ee" strokeWidth="5" strokeDasharray="3 1" />
      <path d="M503.500 0V292M525.500 0V292" stroke="#20305c" strokeDasharray="2 2" />
      <path d="M514.500 0V292" stroke="#3b6b4a" />
    </svg>
  );
}

function RdsCard() {
  return (
    <div className="absolute bottom-[8px] left-[6px] flex h-[204px] w-[328px] flex-col items-center rounded-[3px] bg-black/75 font-['DejaVu_Sans_Mono',monospace] text-[12px] text-white">
      <div className="mt-[4px] flex items-center gap-[22px] leading-[18px]">
        <span>Adult hits</span>
        <span>92.1</span>
        <span>DX</span>
        <ThumbsUp className="size-[14px]" strokeWidth={2} />
      </div>
      <div className="flex gap-[22px] leading-[18px]">
        <span>SILVERTON,CO</span>
        <span>KRDS</span>
      </div>
      <div className="mt-[14px] flex flex-col items-center text-[34px] leading-[47px]">
        <span>3D44</span>
        <span>vidGue</span>
      </div>
      <div className="mt-[12px] flex flex-col items-center leading-[19px]">
        <span>Titanium by David</span>
        <span>Guetta f/Sia on pl</span>
      </div>
    </div>
  );
}

function PlaybackCard() {
  const rows: [string, string][] = [
    ["Title .....:", "92.3 MHz, BW = 10 MHz"],
    ["File ......:", "HDSDR_20210701_191314Z_92300kHz_RF"],
    ["Time ......:", "Thu 01-Jul-2021 15:13:10"],
  ];
  return (
    <div className="absolute bottom-[8px] left-[423px] w-[227px] rounded-[3px] bg-black/75 px-[9px] py-[8px] font-['DejaVu_Sans_Mono',monospace] text-[7px] leading-[13px] text-white">
      {rows.map(([label, value]) => (
        <div key={label} className="flex whitespace-nowrap">
          <span className="w-[58px]">{label}</span>
          <span>{value}</span>
        </div>
      ))}
      <div className="flex items-center whitespace-nowrap">
        <span className="w-[58px]">Playback ..:</span>
        <span>--:02:32</span>
        <span className="mr-[2px] ml-[5px] h-[7px] flex-1 bg-[#1a1a1a]">
          <span className="block h-full w-[22%] bg-[#c4303f]" />
        </span>
      </div>
    </div>
  );
}

function BottomRuler() {
  const marks = Array.from({ length: 10 }, (_, i) => `${70 + i * 5}.000`);
  return (
    <div className="flex h-[18px] border-t border-[#888] bg-[#ececec]">
      <button type="button" aria-label="Pan left" className="flex w-[17px] items-center justify-center">
        <svg viewBox="0 0 12 12" className="size-[11px]" fill="none" stroke="#333">
          <circle cx="6" cy="6" r="5" />
          <path d="M9 6H3.500M5.500 4l-2 2 2 2" />
        </svg>
      </button>
      <div className="relative flex-1 bg-black">
        <div className="absolute inset-y-0 left-[40%] w-[20%] border-x border-[#ccc] bg-gradient-to-b from-[#3a3a3a] via-[#333] to-[#77780a]" />
        <div className="absolute inset-x-0 top-0 h-[3px] bg-[repeating-linear-gradient(90deg,#777_0_1px,transparent_1px_20px)]" />
        <div className="absolute inset-y-0 left-1/2 w-px bg-[#ffff30]" />
        <div className="relative flex justify-between pt-[1px] pr-[30px] pl-[38px] text-[8px] leading-[16px] text-[#b4b4b4]">
          {marks.map((m) => (
            <span key={m} className="w-[30px] text-center">{m}</span>
          ))}
        </div>
      </div>
      <div className="flex w-[79px] items-center">
        <button type="button" aria-label="Keypad" className="flex w-[25px] justify-center"><Keyboard className="size-[12px]" /></button>
        <button type="button" className="flex flex-1 items-center justify-between border-x border-[#c0c0c0] pr-[5px] pl-[5px] text-[8px] leading-[16px]">
          x5 <span className="text-[6px]">▶</span>
        </button>
        <button type="button" aria-label="Pan right" className="flex w-[20px] justify-center">
          <svg viewBox="0 0 12 12" className="size-[11px]" fill="none" stroke="#333">
            <circle cx="6" cy="6" r="5" />
            <path d="M3 6h5.500M6.500 4l2 2-2 2" />
          </svg>
        </button>
      </div>
    </div>
  );
}

function RgbPopup() {
  const labels = ["-15", "-30", "-45", "-60", "-75", "-90", "-105", "-120", "-135", "-150"];
  return (
    <div className="absolute top-[189px] right-[120px] w-[28px] border border-[#ddd] bg-white shadow-[0_1px_4px_rgba(0,0,0,0.5)]">
      <div className="text-center text-[8px] leading-[20px]">RGB</div>
      <div className="relative mx-[1px] mb-[1px] h-[314px] bg-black pt-[15px] text-[6px] text-[#8c8c8c]">
        <div className="absolute top-[205px] right-[1px] left-[1px] h-[22px] border-y border-white bg-gradient-to-b from-white via-[#8ea2f4] to-[#1a2050]">
          <div className="mx-auto h-[4px] w-[18px] bg-[#80805c]" />
        </div>
        {labels.map((l, i) => (
          <div key={l} className={`relative h-[29px] text-center ${i === 6 ? "leading-[32px]" : "leading-[29px]"}`}>{l}</div>
        ))}
      </div>
    </div>
  );
}

function ColourBar() {
  return (
    <div className="flex w-[25px] shrink-0 flex-col border-l border-[#555] bg-black pr-[1px]">
      <button type="button" className="h-[19px] border border-[#444] bg-gradient-to-b from-[#444] to-[#111] text-[8px] text-[#ccc]">
        Auto
      </button>
      <div className="relative flex-1 pt-[18px] text-[6px] text-[#9a9a9a]">
        <div className="absolute inset-x-[1px] top-[209px] h-[211px] border-b border-white bg-[linear-gradient(180deg,#ffff00_0px,#ffff20_6px,#ffffff_20px,#ffffff_70px,#b0bffb_108px,#7c90ee_140px,#3a4590_165px,#14163c_190px,#000_210px)]" />
        {Array.from({ length: 15 }, (_, i) => -10 * (i + 1)).map((v) => (
          <div key={v} className="relative flex h-[35px] items-center justify-center">
            <span
              className={
                v <= -60 && v >= -110
                  ? "w-[18px] rounded-[2px] bg-black/45 text-center leading-[11px] text-[#ccc]"
                  : ""
              }
            >
              {v}
            </span>
          </div>
        ))}
      </div>
    </div>
  );
}

/* ---------- footer ---------- */

function StatusBar() {
  return (
    <div className="flex h-[16px] items-center bg-[#f0f0f0] pr-[14px] pl-[5px] text-[#777]">
      <span className="flex-1">HDSDR_20210701_191038Z_92300kHz_RF, BW = 10.000 MHz</span>
      <span className="text-[#222]">CPU: 33.7%</span>
      <span className="mr-[9px] ml-[9px] h-[8px] w-[47px] border border-[#bcbcbc] bg-[#e6e6e6] p-[1px]">
        <span className="block h-full w-[12px] bg-[#22b830]" />
      </span>
      <span className="text-[#222]">Audio: 24ms</span>
      <span className="ml-[9px] h-[8px] w-[47px] border border-[#bcbcbc] bg-[#e6e6e6] p-[1px]">
        <span className="block h-full w-[12px] bg-[#22b830]" />
      </span>
    </div>
  );
}

function ChromeIcon() {
  return (
    <svg viewBox="0 0 16 16" className="size-4">
      <circle cx="8" cy="8" r="7.500" fill="#fbc116" />
      <path d="M8 8L1.500 4.300A7.500 7.500 0 0 1 14.500 4.300z" fill="#e33b2e" />
      <path d="M8 8L1.500 4.300A7.500 7.500 0 0 0 7.500 15.500z" fill="#2da94f" />
      <circle cx="8" cy="8" r="3.600" fill="#fff" />
      <circle cx="8" cy="8" r="2.800" fill="#3f83f0" />
    </svg>
  );
}

function TaskIcons() {
  const slot = "flex h-full w-[33px] items-center justify-center";
  return (
    <div className="flex h-full">
      <button type="button" aria-label="Start" className="flex h-full w-[32px] items-center justify-center">
        <svg viewBox="0 0 12 12" className="size-[11px]" fill="#fff">
          <path d="M0 1.700l5.300-.8v4.700H0zM6 .8L12 0v5.600H6zM0 6.300h5.300V11L0 10.300zM6 6.300h6V12l-6-.9z" />
        </svg>
      </button>
      <button type="button" aria-label="Search" className="flex h-full w-[32px] items-center justify-center">
        <span className="size-[10px] rounded-full border-2 border-white" />
      </button>
      <button type="button" aria-label="Task view" className={slot}>
        <svg viewBox="0 0 12 12" className="size-[12px]" fill="none" stroke="#ddd">
          <path d="M0.500 0v2.500h7V0M0.500 12V9.500h7V12M0.500 4.500h7v3h-7zM10.500 0v12M9.500 5.500h2" />
        </svg>
      </button>
      <button type="button" aria-label="Chrome" className={slot}><ChromeIcon /></button>
      <button type="button" aria-label="File Explorer" className={slot}>
        <svg viewBox="0 0 16 14" className="h-[14px] w-[15px]">
          <path d="M1 1h5l1.500 1.500H15V13H1z" fill="#e9b22c" />
          <path d="M1 4h14v9H1z" fill="#ffdc6b" />
          <path d="M4 13V8.500h8V13h-2.500v-2h-3v2z" fill="#4aa3df" />
        </svg>
      </button>
      <button type="button" aria-label="To do" className={`relative ${slot}`}>
        <svg viewBox="0 0 16 12" className="h-[12px] w-4">
          <path d="M1 5l3-2.500 3 3.500L13 0l3 2.500L7 11.500z" fill="#2f7fe0" />
        </svg>
        <span className="absolute right-[1px] bottom-[3px] rounded-full bg-[#444] px-[2px] text-[7px] leading-[10px] text-white">20</span>
      </button>
      <button type="button" aria-label="Headphones" className={slot}>
        <svg viewBox="0 0 16 16" className="size-[15px]">
          <circle cx="8" cy="8" r="7.500" fill="#111" stroke="#bbb" />
          <path d="M4 9.500a4 4 0 1 1 8 0" fill="none" stroke="#fff" strokeWidth="1.600" />
          <circle cx="4.800" cy="10" r="1.600" fill="#fff" />
          <circle cx="11.200" cy="10" r="1.600" fill="#fff" />
        </svg>
      </button>
      <button type="button" aria-label="OneNote" className={slot}>
        <span className="flex size-[14px] items-center justify-center bg-[#7b2cbf] text-[9px] font-bold text-white">N</span>
      </button>
      <button type="button" aria-label="SDR Console" className={`${slot} border-b-2 border-[#76b9ed] bg-[#4a4a4a]`}>
        <svg viewBox="0 0 16 16" className="size-[15px]">
          <circle cx="8" cy="8" r="7.500" fill="#c02840" />
          <path d="M8 6v8M5 14l3-6 3 6M5.500 8a3.300 3.300 0 1 1 5 0M3.800 9.500a5.500 5.500 0 1 1 8.400 0" fill="none" stroke="#f4d8dc" />
        </svg>
      </button>
    </div>
  );
}

function Tray() {
  const slot = "flex w-4 items-center justify-center";
  return (
    <div className="flex items-center text-[#e8e8e8] [&_svg]:size-[12px]">
      <ChevronDown className="mr-[3px]" color="#999" />
      <span className={slot}><Usb className="-rotate-45" /></span>
      <span className={slot}>
        <svg viewBox="0 0 12 12">
          <circle cx="6" cy="6" r="5.300" fill="#111" stroke="#ccc" />
          <path d="M6 2.500a3 3 0 0 1 2.500 4M3 7.500a3 3 0 0 1 1-4.500" fill="none" stroke="#ccc" />
          <circle cx="3" cy="9.500" r="2.500" fill="#d8202c" />
        </svg>
      </span>
      <span className={slot}><Mic fill="#fff" /></span>
      <span className={slot}>
        <span className="flex size-[12px] items-center justify-center rounded-full bg-[#dce8f0] text-[#3a7ca8]"><Wrench strokeWidth={2.5} className="p-[2px]" /></span>
      </span>
      <span className={slot}>
        <span className="flex size-[12px] items-center justify-center rounded-[3px] bg-[#3f86f4] text-white"><Video fill="#fff" className="p-[2px]" /></span>
      </span>
      <span className={slot}><Slack color="#e04070" strokeWidth={3} /></span>
      <span className={slot}><Cloud color="#1b88d8" fill="#1b88d8" /></span>
      <span className={slot}><Cloud color="#e0e0e0" fill="#e0e0e0" /></span>
      <span className={slot}>
        <svg viewBox="0 0 12 12">
          <circle cx="5.500" cy="5.500" r="5" fill="#35a6de" />
          <path d="M2 5.500L9 3l-1.500 6L5 7z" fill="#fff" />
          <circle cx="8.500" cy="8.500" r="3.500" fill="#e0303a" />
          <text x="8.500" y="10.700" fontSize="6" textAnchor="middle" fill="#fff" fontFamily="Open Sans, sans-serif">1</text>
        </svg>
      </span>
      <span className={slot}>
        <span className="flex h-[13px] w-[9px] items-center justify-center rounded-full bg-[#1277d4]"><Bluetooth className="p-[1px]" /></span>
      </span>
      <span className={slot}>
        <svg viewBox="0 0 12 12">
          <path d="M6 0l5 1.500V6q0 4-5 6-5-2-5-6V1.500z" fill="#fff" />
          <path d="M6 1v10M1.500 5.500h9" stroke="#222" />
          <path d="M9 6.500l3 5.500H6z" fill="#f7c52c" />
        </svg>
      </span>
      <span className={slot}>
        <svg viewBox="0 0 12 12" fill="none" stroke="#eee">
          <rect x="3" y="4" width="8" height="5" fill="#eee" />
          <path d="M0.500 3v3h3M1 2v2M3 2v2M11.500 5.500v2" />
        </svg>
      </span>
      <span className={slot}><Volume2 /></span>
      <span className={slot}>
        <svg viewBox="0 0 12 12" fill="none" stroke="#ddd">
          <rect x="2.500" y="1.500" width="9" height="6.500" />
          <path d="M5 10.500h4M0.500 2v5h2v4" />
        </svg>
      </span>
    </div>
  );
}

function Taskbar() {
  return (
    <footer className="flex h-[27px] items-center bg-[#2a2828] font-['Open_Sans','Noto_Sans',sans-serif] text-white">
      <TaskIcons />
      <div className="ml-auto flex items-center gap-[6px] pr-[8px] text-[9px]">
        <Cloud className="size-[15px]" color="#b8d8ee" fill="#e4eff6" />
        <span>70°F</span>
        <span>Rain coming</span>
      </div>
      <Tray />
      <div className="ml-[3px] flex w-[38px] flex-col items-center text-[8px] leading-[12px] whitespace-nowrap">
        <span>10:56 PM</span>
        <span>7/1/2021</span>
      </div>
      <button type="button" aria-label="Notifications" className="relative mr-[9px] ml-[6px] flex h-full w-[22px] items-center">
        <svg viewBox="0 0 12 12" className="size-[12px]">
          <path d="M0 0h12v9H6l-3 3V9H0z" fill="#fff" />
          <path d="M2 3h8M2 6h8" stroke="#333" />
        </svg>
        <span className="absolute right-[1px] bottom-[4px] rounded-full border border-[#aaa] bg-[#333] px-[1px] text-[7px] leading-[10px]">47</span>
      </button>
    </footer>
  );
}

export default function App() {
  return (
    <div className="flex min-h-screen flex-col bg-[#f0f0f0] font-['Open_Sans','Noto_Sans',sans-serif] text-[7px] leading-[9px] text-black">
      <div className="flex flex-1 flex-col border-r border-l-2 border-r-[#5c5c60] border-l-[#6e747c]">
        <TitleArea />
        <Ribbon />
        <div className="h-[2px] border-t border-[#a9abb5] bg-white" />
        <main className="flex flex-1">
          <ReceivePanel />
          <div className="relative flex min-w-0 flex-1 flex-col border-l-2 border-white">
            <Spectrum />
            <div className="flex h-[4px] items-center justify-center bg-[#f0f0f0]">
              <span className="w-[40px] border-t border-dotted border-[#777]" />
            </div>
            <div className="relative flex-1 overflow-hidden">
              <WaterfallCanvas />
              <RdsCard />
              <PlaybackCard />
            </div>
            <BottomRuler />
            <RgbPopup />
          </div>
          <ColourBar />
        </main>
        <StatusBar />
      </div>
      <Taskbar />
    </div>
  );
}
